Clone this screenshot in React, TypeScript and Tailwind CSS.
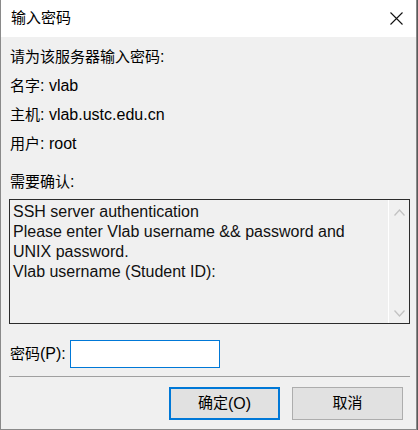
import { useState } from 'react'

const font = { fontFamily: '"Liberation Sans", "Noto Sans CJK SC", sans-serif' }

function Chevron({ up }: { up?: boolean }) {
  return (
    <svg width="11" height="7" viewBox="0 0 11 7" fill="none" stroke="#c2c2c2" strokeWidth="1.3">
      {up ? <path d="M0.5 6.5 L5.5 1 L10.5 6.5" /> : <path d="M0.5 0.5 L5.5 6 L10.5 0.5" />}
    </svg>
  )
}

function InfoLine({ label, value }: { label: string; value: string }) {
  return (
    <div className="h-[29px] leading-[29px]">
      {label}
      <span className="text-[16px]">: {value}</span>
    </div>
  )
}

function App() {
  const [password, setPassword] = useState('')

  return (
    <div className="flex h-[430px] w-[418px] bg-[#5a5a5a]" style={font}>
      <div className="flex h-[430px] w-[417px] flex-col border-x border-b border-[#8a8a8a] bg-[#f0f0f0] text-[15px] text-black">
        <div className="flex h-[37px] shrink-0 items-center justify-between bg-white pl-[10px] pr-[13px]">
          <span className="pb-[1px]">输入密码</span>
          <svg width="13" height="13" viewBox="0 0 13 13" stroke="#111" strokeWidth="1.1">
            <path d="M0.5 0.5 L12.5 12.5 M12.5 0.5 L0.5 12.5" />
          </svg>
        </div>

        <div className="flex flex-col pl-[9px] pt-[5px]">
          <div className="h-[29px] leading-[29px]">
            请为该服务器输入密码<span className="text-[16px]">:</span>
          </div>
          <InfoLine label="名字" value="vlab" />
          <InfoLine label="主机" value="vlab.ustc.edu.cn" />
          <InfoLine label="用户" value="root" />
          <div className="mt-[9px] h-[29px] leading-[29px]">
            需要确认<span className="text-[16px]">:</span>
          </div>
        </div>

        <div className="ml-[8px] mt-[3px] flex h-[125px] w-[401px] border border-[#2b2b2b] bg-[#f0f0f0]">
          <div className="flex-1 px-[3px] pt-[2px] text-[16px] leading-[20px] text-[#111]">
            SSH server authentication
            <br />
            Please enter Vlab username &amp;&amp; password and
            <br />
            UNIX password.
            <br />
            Vlab username (Student ID):
          </div>
          <div className="flex w-[21px] flex-col items-center justify-between border-l border-white pb-[6px] pt-[9px]">
            <Chevron up />
            <Chevron />
          </div>
        </div>

        <div className="mt-[16px] flex h-[28px] items-center pl-[9px]">
          <span className="w-[60px]">
            密码<span className="text-[16px]">(P):</span>
          </span>
          <input
            type="password"
            value={password}
            onChange={(e) => setPassword(e.target.value)}
            className="h-[28px] w-[150px] border border-[#0078d7] bg-white px-1 outline-none"
          />
        </div>

        <div className="ml-[8px] mt-[8px] h-px w-[401px] bg-[#a0a0a0]" />

        <div className="mt-[10px] flex justify-end gap-[12px] pr-[13px]">
          <button
            type="button"
            className="flex h-[33px] w-[111px] items-center justify-center border-2 border-[#0078d7] bg-[#e1e1e1]"
          >
            确定<span className="text-[16px]">(O)</span>
          </button>
          <button
            type="button"
            className="flex h-[33px] w-[111px] items-center justify-center border border-[#adadad] bg-[#e1e1e1]"
          >
            取消
          </button>
        </div>
      </div>
    </div>
  )
}

export default App
